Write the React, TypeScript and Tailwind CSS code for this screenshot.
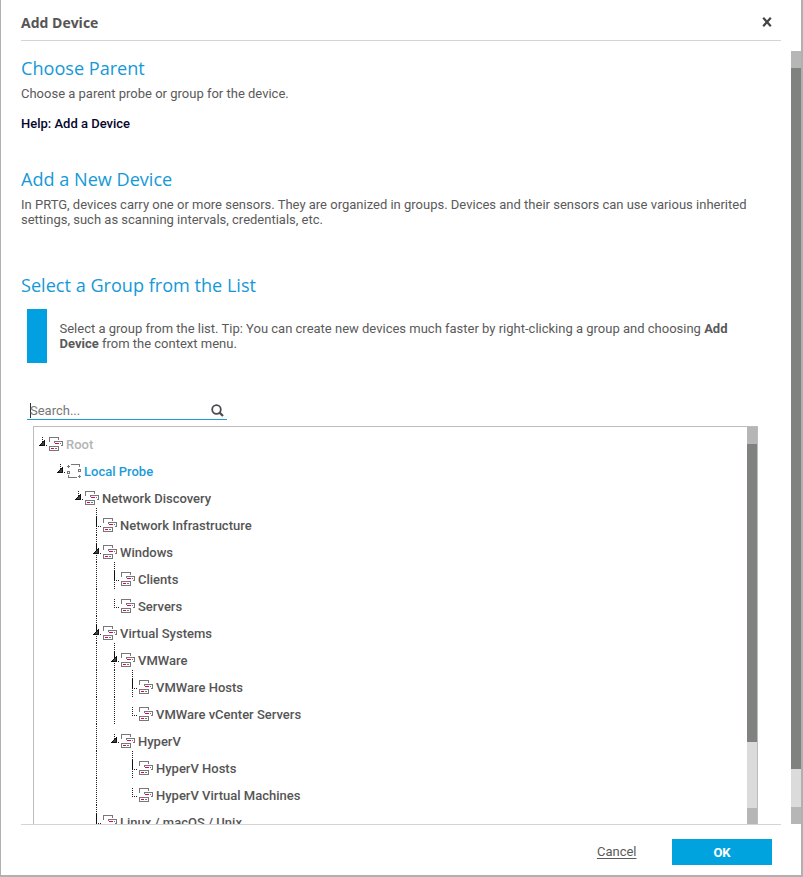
import React from "react";

type Row = {
  label: string;
  // One entry per enclosing level: true draws the continuing branch line.
  trail: boolean[];
  node: "root" | "mid" | "last";
  open?: boolean;
  probe?: boolean;
  tone?: string;
};

const rows: Row[] = [
  { label: "Root", trail: [], node: "last", open: true, tone: "text-[#b4b4b4]" },
  { label: "Local Probe", trail: [false], node: "last", open: true, probe: true, tone: "text-[#1c9bd8]" },
  { label: "Network Discovery", trail: [false, false], node: "last", open: true },
  { label: "Network Infrastructure", trail: [false, false, false], node: "mid" },
  { label: "Windows", trail: [false, false, false], node: "mid", open: true },
  { label: "Clients", trail: [false, false, false, true], node: "mid" },
  { label: "Servers", trail: [false, false, false, true], node: "last" },
  { label: "Virtual Systems", trail: [false, false, false], node: "mid", open: true },
  { label: "VMWare", trail: [false, false, false, true], node: "mid", open: true },
  { label: "VMWare Hosts", trail: [false, false, false, true, true], node: "mid" },
  { label: "VMWare vCenter Servers", trail: [false, false, false, true, true], node: "last" },
  { label: "HyperV", trail: [false, false, false, true], node: "last", open: true },
  { label: "HyperV Hosts", trail: [false, false, false, true, false], node: "mid" },
  { label: "HyperV Virtual Machines", trail: [false, false, false, true, false], node: "last" },
  { label: "Linux / macOS / Unix", trail: [false, false, false], node: "mid" },
];

function Trail({ on }: { on: boolean }) {
  return (
    <svg width="18" height="27" className="block shrink-0">
      {on && <path d="M8.5 0V27" stroke="#222" strokeDasharray="1 1" shapeRendering="crispEdges" />}
    </svg>
  );
}

function Joint({ node, open }: { node: Row["node"]; open?: boolean }) {
  return (
    <svg width="15" height="27" className="block shrink-0" shapeRendering="crispEdges">
      {node === "mid" ? (
        <>
          <path d="M8.5 0V27" stroke="#222" strokeDasharray="1 1" />
          <path d={open ? "M8.5 9V14" : "M8.5 9V19"} stroke="#111" />
        </>
      ) : (
        <path d="M8.5 10V19" stroke="#222" strokeDasharray="1 1" />
      )}
      {open ? (
        <>
          <path d="M11 13V19H5Z" fill="#444" />
          <path d="M10.5 13V18.5H5M5.5 18.5L10.5 13.5" stroke="#111" fill="none" shapeRendering="auto" />
          <path d="M12 18.5H13" stroke="#222" />
        </>
      ) : (
        <path d="M10 18.5H13" stroke="#222" strokeDasharray="1 1" />
      )}
    </svg>
  );
}

function GroupIcon() {
  return (
    <svg width="14" height="14" className="mt-[10px] block shrink-0" fill="none" stroke="#777" shapeRendering="crispEdges">
      <path d="M.5 5V.5H9.5V3" />
      <path d="M5.5 6V4.5H13.5V8.5H12" />
      <path d="M.5 9.5H9.5V13.5H.5Z" />
      <path d="M6 6.5H10M2 11.5H5" stroke="#e0006c" />
      <path d="M11 6.5H12M6 11.5H8" />
    </svg>
  );
}

function ProbeIcon() {
  return (
    <svg width="14" height="14" className="mt-[10px] block shrink-0" fill="none" stroke="#777" shapeRendering="crispEdges">
      <path d="M4 .5H12.5V3M1.5 11V13.5H10" />
      <path d="M0 2.5H3M1.5 1V4M11 12.5H14M12.5 11V14" />
      <rect x=".5" y="7.5" width="2" height="2" />
      <rect x="11.5" y="5.5" width="2" height="2" />
    </svg>
  );
}

function TreeRow({ row }: { row: Row }) {
  return (
    <div className="flex h-[27px]">
      {row.trail.map((on, i) => (
        <Trail key={i} on={on} />
      ))}
      <Joint node={row.node} open={row.open} />
      {row.probe ? <ProbeIcon /> : <GroupIcon />}
      <span className={`ml-[3px] mt-[10px] text-[13px] leading-[15px] font-medium whitespace-nowrap ${row.tone ?? "text-[#555]"}`}>
        {row.label}
      </span>
    </div>
  );
}

function Heading({ children }: { children: React.ReactNode }) {
  return <h2 className="h-6 font-['Open_Sans',sans-serif] text-[18.1px] leading-6 text-[#1499d8] whitespace-nowrap">{children}</h2>;
}

export default function App() {
  return (
    <div className="flex h-[877px] w-[803px] flex-col overflow-hidden border-r-2 border-b-2 border-l border-[#b0b0b0] bg-white font-[Roboto,sans-serif] text-[13px] leading-[15px] text-[#5a5a5a]">
      <header className="ml-5 flex h-[41px] w-[760px] shrink-0 justify-between border-b border-[#d4d4d4] pt-[13px] pr-[9px]">
        <h1 className="font-['Open_Sans',sans-serif] text-[14px] leading-5 font-bold text-[#555]">Add Device</h1>
        <svg width="10" height="10" viewBox="0 0 10 10" className="mt-1" stroke="#444" strokeWidth="2.2">
          <path d="M1.2 .8L8.8 9.2M8.8 .8L1.2 9.2" />
        </svg>
      </header>

      <div className="flex h-[783px] shrink-0">
        <main className="ml-5 w-[760px] shrink-0 overflow-hidden pt-[15px]">
          <section className="h-[111px]">
            <Heading>Choose Parent</Heading>
            <p className="mt-[6px]">Choose a parent probe or group for the device.</p>
            <p className="mt-[15px] font-medium text-[#06062c]">Help: Add a Device</p>
          </section>
          <section className="h-[106px]">
            <Heading>Add a New Device</Heading>
            <p className="mt-[6px] whitespace-nowrap">
              In PRTG, devices carry one or more sensors. They are organized in groups. Devices and their sensors can use various inherited
              <br />
              settings, such as scanning intervals, credentials, etc.
            </p>
          </section>
          <section>
            <Heading>Select a Group from the List</Heading>
            <div className="mt-3 ml-[6px] flex h-[54px] items-center border-l-[20px] border-[#00a0e1] pl-[12.5px]">
              <p className="whitespace-nowrap">
                Select a group from the list. Tip: You can create new devices much faster by right-clicking a group and choosing <b>Add</b>
                <br />
                <b>Device</b> from the context menu.
              </p>
            </div>
          </section>

          <div className="mt-[38px] ml-[6px] flex h-[19px] w-[200px] border-b border-[#1c9bd8]">
            <span className="mt-[2px] ml-[3px] h-[15px] w-px bg-[#333]" />
            <span className="mt-[2px] -ml-px flex-1 text-[#777]">Search...</span>
            <svg width="13" height="13" viewBox="0 0 13 13" className="mt-[3px] mr-[3px]" fill="none" stroke="#4b4b50" strokeWidth="1.8">
              <circle cx="5.5" cy="5.5" r="4.3" />
              <path d="M8.6 8.6L12 12" strokeWidth="2.2" />
            </svg>
          </div>

          <div className="mt-[6px] ml-3 flex h-[420px] w-[725px] border border-[#bcbcbc]">
            <div className="flex-1">
              {rows.map((row) => (
                <TreeRow key={row.label} row={row} />
              ))}
            </div>
            <div className="flex w-[10px] flex-col bg-[#dbdbdb]">
              <div className="h-[17px] bg-[#b6b6b6]" />
              <div className="h-[298px] bg-[#808280]" />
              <div className="h-[66px]" />
              <div className="flex-1 bg-[#b6b6b6]" />
            </div>
          </div>
        </main>
        <div className="mt-[10px] ml-[10px] flex h-[773px] w-[10px] flex-col bg-[#dbdbdb]">
          <div className="h-[17px] bg-[#b6b6b6]" />
          <div className="h-[701px] bg-[#808280]" />
          <div className="h-[38px]" />
          <div className="h-[17px] bg-[#b6b6b6]" />
        </div>
      </div>

      <footer className="ml-5 flex w-[760px] flex-1 justify-end border-t border-[#d4d4d4] pr-[9px]">
        <a className="mt-[19px] mr-[35.5px] underline underline-offset-2">Cancel</a>
        <button className="mt-[14px] h-[26px] w-[100px] bg-[#00a3de] font-bold text-white">OK</button>
      </footer>
    </div>
  );
}
